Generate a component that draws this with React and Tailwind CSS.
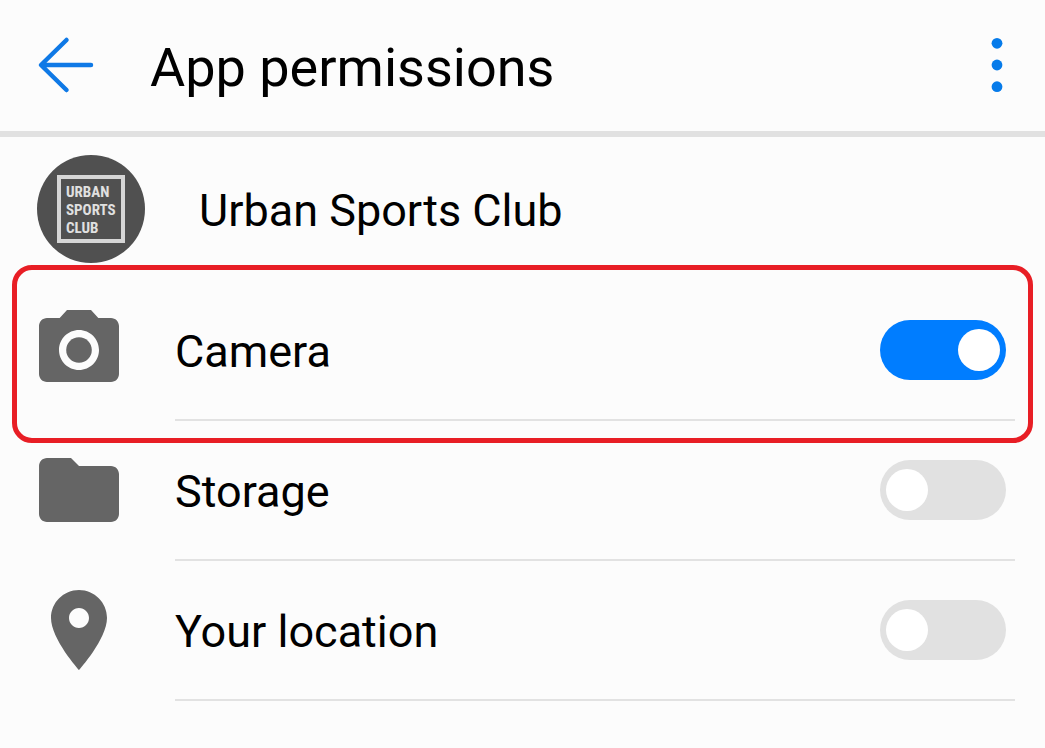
import React, { useState } from 'react';

const PERMISSIONS = [
  { id: 'camera', label: 'Camera', icon: CameraIcon, granted: true, highlighted: true },
  { id: 'storage', label: 'Storage', icon: FolderIcon, granted: false },
  { id: 'location', label: 'Your location', icon: PinIcon, granted: false }
];

function BackIcon() {
  return (
    <svg className="w-16 h-16" viewBox="0 0 64 64" fill="none" stroke="#0f79e6" strokeWidth="4.5" strokeLinecap="round" strokeLinejoin="round" aria-hidden="true">
      <path d="M34.5 7 9 32 34.5 57M9.5 32h49.5" />
    </svg>
  );
}

function MoreIcon() {
  return (
    <svg className="w-16 h-16" viewBox="0 0 64 64" fill="#067bea" aria-hidden="true">
      <circle cx="32" cy="10.3" r="5.4" />
      <circle cx="32" cy="32" r="5.4" />
      <circle cx="32" cy="53.7" r="5.4" />
    </svg>
  );
}

function CameraIcon() {
  return (
    <svg className="w-24 h-24" viewBox="0 0 24 24" fill="#656565" aria-hidden="true">
      <circle cx="12" cy="12" r="3.2" />
      <path d="M9 2 7.17 4H4c-1.1 0-2 .9-2 2v12c0 1.1.9 2 2 2h16c1.1 0 2-.9 2-2V6c0-1.1-.9-2-2-2h-3.17L15 2H9zm3 15c-2.76 0-5-2.24-5-5s2.24-5 5-5 5 2.24 5 5-2.24 5-5 5z" />
    </svg>
  );
}

function FolderIcon() {
  return (
    <svg className="w-24 h-24" viewBox="0 0 24 24" fill="#656565" aria-hidden="true">
      <path d="M10 4H4c-1.1 0-1.99.9-1.99 2L2 18c0 1.1.9 2 2 2h16c1.1 0 2-.9 2-2V8c0-1.1-.9-2-2-2h-8l-2-2z" />
    </svg>
  );
}

function PinIcon() {
  return (
    <svg className="w-24 h-24" viewBox="0 0 24 24" fill="#656565" aria-hidden="true">
      <path d="M12 2C8.13 2 5 5.13 5 9c0 5.25 7 13 7 13s7-7.75 7-13c0-3.87-3.13-7-7-7zm0 9.5c-1.38 0-2.5-1.12-2.5-2.5s1.12-2.5 2.5-2.5 2.5 1.12 2.5 2.5-1.12 2.5-2.5 2.5z" />
    </svg>
  );
}

function AppLogo() {
  return (
    <svg className="w-[108px] h-[108px] shrink-0" viewBox="0 0 108 108" aria-hidden="true">
      <circle cx="54" cy="54" r="54" fill="#505050" />
      <rect x="22" y="22" width="64" height="64" fill="none" stroke="#d6d6d6" strokeWidth="4" />
      <g fill="#e0e0e0" fontFamily="'Roboto Condensed', Roboto, sans-serif" fontWeight="700" fontSize="15">
        <text x="29" y="42">URBAN</text>
        <text x="29" y="60">SPORTS</text>
        <text x="29" y="78">CLUB</text>
      </g>
    </svg>
  );
}

function PermissionRow({ permission, checked, onChange }) {
  const Icon = permission.icon;
  return (
    <li className="relative flex h-[140px] pl-[31px] pr-[30px]">
      <div className="w-36 shrink-0 flex items-center pb-[2px]">
        <Icon />
      </div>
      <div className="flex-1 flex items-center justify-between border-b-2 border-[#e2e2e2] pr-[9px]">
        <label htmlFor={permission.id} className="pt-1 text-[45px] leading-[54px]">{permission.label}</label>
        <input
          id={permission.id}
          type="checkbox"
          role="switch"
          checked={checked}
          onChange={onChange}
          className="appearance-none shrink-0 flex items-center w-[126px] h-[60px] px-[6px] rounded-full bg-[#e1e1e1] checked:bg-[#007dff] checked:justify-end before:block before:w-[42px] before:h-[42px] before:rounded-full before:bg-white"
        />
      </div>
      {permission.highlighted && (
        <div className="absolute -top-4 -bottom-[22px] inset-x-3 border-5 border-[#e81e25] rounded-[20px] pointer-events-none" />
      )}
    </li>
  );
}

export default function App() {
  const [granted, setGranted] = useState(
    Object.fromEntries(PERMISSIONS.map(p => [p.id, p.granted]))
  );

  const toggle = (id) => setGranted(prev => ({ ...prev, [id]: !prev[id] }));

  return (
    <div className="min-h-screen bg-[#fcfcfc] text-black font-[Roboto,sans-serif]">
      <header className="flex items-center h-[137px] pl-8 pr-4 pb-[2px] border-b-6 border-[#e1e1e1]">
        <button type="button" aria-label="Back"><BackIcon /></button>
        <h1 className="flex-1 pl-[54px] pt-1.5 text-[54px] leading-[64px]">App permissions</h1>
        <button type="button" aria-label="More options"><MoreIcon /></button>
      </header>

      <main>
        <div className="flex items-center h-36 pl-[37px]">
          <AppLogo />
          <h2 className="pl-[54px] pt-1 text-[45px] leading-[54px]">Urban Sports Club</h2>
        </div>

        <ul>
          {PERMISSIONS.map(p => (
            <PermissionRow key={p.id} permission={p} checked={granted[p.id]} onChange={() => toggle(p.id)} />
          ))}
        </ul>
      </main>
    </div>
  );
}
